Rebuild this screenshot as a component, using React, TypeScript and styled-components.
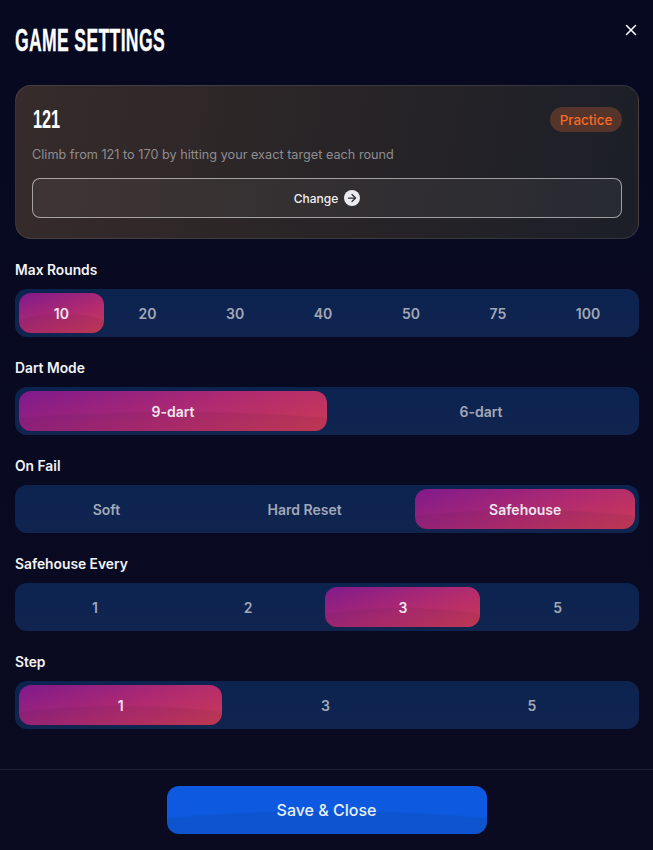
import React from "react";
import styled, { createGlobalStyle } from "styled-components";
import { ArrowRight, X } from "lucide-react";

const GlobalStyle = createGlobalStyle`
  html, body {
    margin: 0;
    padding: 0;
    background: #070920;
  }
  * {
    box-sizing: border-box;
  }
`;

const Page = styled.div`
  width: 653px;
  height: 850px;
  display: flex;
  flex-direction: column;
  background: linear-gradient(180deg, #070921 0%, #0a0b21 100%);
  color: #fff;
  font-family: Inter, "Noto Sans", sans-serif;
`;

const Header = styled.header`
  height: 85px;
  padding: 24px 15px 0;
  display: flex;
  justify-content: space-between;
  align-items: flex-start;
`;

const Title = styled.h1`
  margin: 0;
  font-family: "Liberation Sans", sans-serif;
  font-size: 32px;
  line-height: 32px;
  font-weight: 700;
  letter-spacing: 0.6px;
  white-space: nowrap;
  text-transform: uppercase;
  -webkit-text-stroke: 0.3px #fff;
  transform: scaleX(0.55);
  transform-origin: left center;
`;

const CloseButton = styled.button`
  margin: -3px -2px 0 0;
  padding: 0;
  width: 18px;
  height: 18px;
  display: flex;
  border: 0;
  background: none;
  color: #fff;
`;

const Body = styled.main`
  flex: 1;
  padding: 0 14px 0 15px;
  display: flex;
  flex-direction: column;
`;

const GameCard = styled.section`
  height: 154px;
  padding: 21px 16px 0;
  border: 1px solid rgba(255, 255, 255, 0.1);
  border-radius: 16px;
  background: linear-gradient(100deg, #372b2b 0%, #2a2527 45%, #1c1f28 100%);
  margin-bottom: 20px;
`;

const CardTop = styled.div`
  display: flex;
  justify-content: space-between;
  align-items: center;
  height: 25px;
`;

const GameName = styled.h2`
  margin: 0 0 0 1px;
  font-family: "Liberation Sans", sans-serif;
  font-size: 25px;
  font-weight: 700;
  transform: scaleX(0.65);
  transform-origin: left center;
`;

const Pill = styled.span`
  height: 25px;
  width: 72px;
  display: flex;
  align-items: center;
  justify-content: center;
  border-radius: 13px;
  background: #55352b;
  color: #f56a25;
  font-size: 13.4px;
  font-weight: 500;
`;

const Description = styled.p`
  margin: 14px 0 14px;
  font-size: 12.7px;
  line-height: 18px;
  color: #8f8d90;
`;

const ChangeButton = styled.button`
  width: 100%;
  height: 40px;
  padding-bottom: 1px;
  display: flex;
  align-items: center;
  justify-content: center;
  gap: 6px;
  border: 1px solid rgba(255, 255, 255, 0.55);
  border-radius: 8px;
  background: rgba(255, 255, 255, 0.05);
  color: #f0f0f2;
  font-family: inherit;
  font-size: 12px;
  font-weight: 500;
`;

const ArrowBadge = styled.span`
  width: 16px;
  height: 16px;
  display: flex;
  align-items: center;
  justify-content: center;
  border-radius: 50%;
  background: #ececf0;
  color: #2b2b33;
`;

const Section = styled.section`
  height: 98px;
  display: flex;
  flex-direction: column;
`;

const Label = styled.div`
  height: 30px;
  padding-top: 2px;
  font-size: 13.8px;
  line-height: 18px;
  font-weight: 600;
  color: #f2f2f5;
`;

const Segments = styled.div`
  height: 48px;
  padding: 4px;
  display: flex;
  border-radius: 12px;
  background: linear-gradient(180deg, #0c2350 0%, #10244f 100%);
`;

const Segment = styled.button<{ $active: boolean }>`
  flex: 1 1 auto;
  padding: 0;
  border: 0;
  border-radius: 12px;
  font-family: inherit;
  font-size: 14px;
  font-weight: 600;
  color: ${(p) => (p.$active ? "#f0e6f0" : "#a2a8b8")};
  background: ${(p) =>
    p.$active
      ? `radial-gradient(ellipse 85% 75% at 50% 125%, rgba(30, 20, 40, 0.08) 94%, transparent 100%),
         linear-gradient(160deg, #7f1a8c 0%, #b02a70 55%, #cb3a55 100%)`
      : "transparent"};
`;

const Footer = styled.footer`
  height: 81px;
  display: flex;
  justify-content: center;
  padding-top: 16px;
  border-top: 1px solid #1d2036;
`;

const SaveButton = styled.button`
  width: 320px;
  height: 48px;
  border: 0;
  border-radius: 12px;
  background:
    radial-gradient(ellipse 85% 75% at 50% 125%, rgba(20, 30, 60, 0.1) 94%, transparent 100%),
    #0d5ae0;
  color: #e8eefc;
  font-family: inherit;
  font-size: 16px;
  font-weight: 500;
`;

const settings = [
  { label: "Max Rounds", options: ["10", "20", "30", "40", "50", "75", "100"], active: "10" },
  { label: "Dart Mode", options: ["9-dart", "6-dart"], active: "9-dart" },
  { label: "On Fail", options: ["Soft", "Hard Reset", "Safehouse"], active: "Safehouse" },
  { label: "Safehouse Every", options: ["1", "2", "3", "5"], active: "3" },
  { label: "Step", options: ["1", "3", "5"], active: "1" },
];

export default function App() {
  return (
    <Page>
      <GlobalStyle />
      <Header>
        <Title>Game Settings</Title>
        <CloseButton aria-label="Close">
          <X size={18} strokeWidth={2} />
        </CloseButton>
      </Header>
      <Body>
        <GameCard>
          <CardTop>
            <GameName>121</GameName>
            <Pill>Practice</Pill>
          </CardTop>
          <Description>Climb from 121 to 170 by hitting your exact target each round</Description>
          <ChangeButton>
            Change
            <ArrowBadge>
              <ArrowRight size={12} strokeWidth={2.5} />
            </ArrowBadge>
          </ChangeButton>
        </GameCard>
        {settings.map((s) => (
          <Section key={s.label}>
            <Label>{s.label}</Label>
            <Segments>
              {s.options.map((o) => (
                <Segment key={o} $active={o === s.active}>
                  {o}
                </Segment>
              ))}
            </Segments>
          </Section>
        ))}
      </Body>
      <Footer>
        <SaveButton>Save &amp; Close</SaveButton>
      </Footer>
    </Page>
  );
}
